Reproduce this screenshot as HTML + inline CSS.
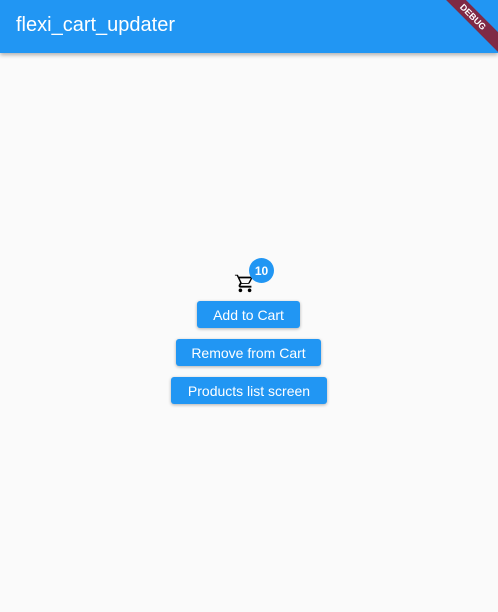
<!DOCTYPE html><html><head><style>
body{margin:0;width:498px;height:612px;background:#fafafa;font-family:"Liberation Sans",sans-serif;overflow:hidden;position:relative}
.bar{position:absolute;top:0;left:0;width:498px;height:53px;background:#2196f3;box-shadow:0 2px 4px rgba(0,0,0,.3)}
.bar span{position:absolute;left:16px;top:14px;color:#fff;font-size:20px}
.btn{position:absolute;background:#2196f3;color:#fff;font-size:14px;border-radius:3px;box-shadow:0 1px 3px rgba(0,0,0,.3);display:flex;align-items:center;justify-content:center;height:27px}
.badge{position:absolute;left:249px;top:258px;width:25px;height:25px;border-radius:50%;background:#2196f3;color:#fff;font-size:12px;font-weight:bold;display:flex;align-items:center;justify-content:center}
.debug{position:absolute;top:10px;right:-30px;width:110px;height:14px;background:#7f2a45;color:#fff;font-size:9px;font-weight:bold;text-align:center;line-height:14px;transform:rotate(45deg);letter-spacing:0px}
</style></head><body>
<div class="bar"><span>flexi_cart_updater</span></div>
<div class="debug">DEBUG</div>
<svg style="position:absolute;left:234px;top:272px" width="22" height="22" viewBox="0 0 24 24"><path d="M7 18c-1.1 0-2 .9-2 2s.9 2 2 2 2-.9 2-2-.9-2-2-2zm10 0c-1.1 0-2 .9-2 2s.9 2 2 2 2-.9 2-2-.9-2-2-2zM1 2v2h2l3.6 7.59-1.35 2.45C4.52 15.37 5.48 17 7 17h12v-2H7l1.1-2h7.45c.75 0 1.41-.41 1.75-1.03L21 5H5.21l-.94-2H1zm5.16 5h12.15l-2.76 5H8.53L6.16 7z" fill="#000"/></svg>
<div class="badge">10</div>
<div class="btn" style="left:197px;top:301px;width:103px">Add to Cart</div>
<div class="btn" style="left:176px;top:339px;width:145px">Remove from Cart</div>
<div class="btn" style="left:171px;top:377px;width:156px">Products list screen</div>
</body></html>
